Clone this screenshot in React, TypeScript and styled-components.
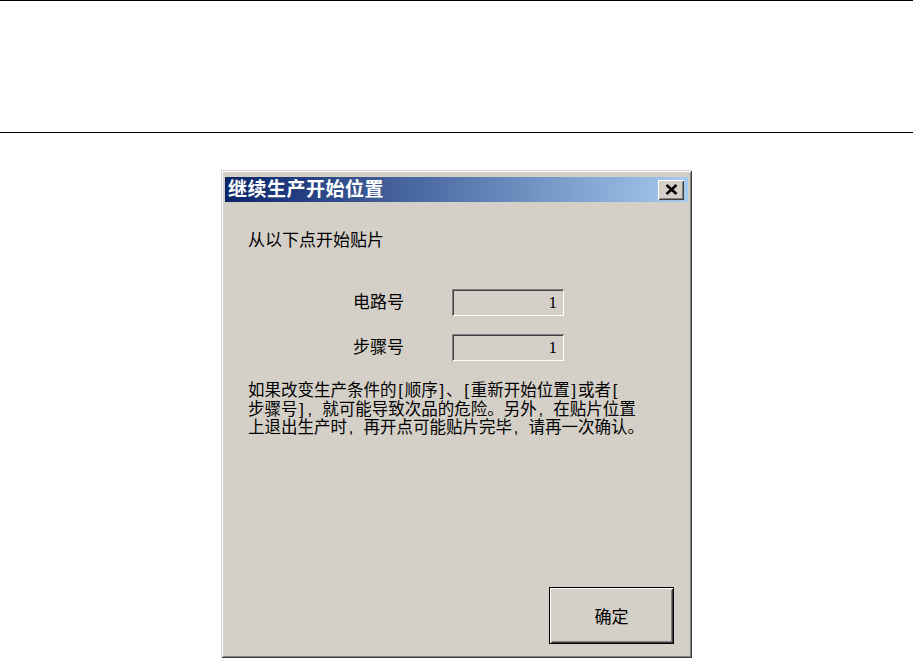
import React from 'react';
import styled, { createGlobalStyle } from 'styled-components';

const GlobalStyle = createGlobalStyle`
  html, body {
    margin: 0;
    padding: 0;
    background: #ffffff;
  }
  body {
    font-family: "Liberation Sans", "Noto Sans CJK SC", sans-serif;
    color: #000000;
  }
`;

const Page = styled.div`
  width: 913px;
  height: 658px;
  overflow: hidden;
  display: flex;
  flex-direction: column;
`;

const Header = styled.div`
  height: 131px;
  border-top: 1px solid #000;
  border-bottom: 1px solid #000;
`;

const Stage = styled.div`
  flex: 1;
  display: flex;
  justify-content: center;
  padding-top: 37px;
`;

const Dialog = styled.div`
  width: 471px;
  box-sizing: border-box;
  display: flex;
  flex-direction: column;
  padding: 7px 4px 4px 4px;
  background: #d4d0c8;
  box-shadow: inset 1px 1px #d4d0c8, inset -1px -1px #404040,
    inset 2px 2px #ffffff, inset -2px -2px #808080;
`;

const TitleBar = styled.div`
  height: 25px;
  display: flex;
  align-items: center;
  justify-content: space-between;
  padding: 0 4px 0 3px;
  background: linear-gradient(to right, #0a246a, #a6caf0);
`;

const Title = styled.span`
  color: #ffffff;
  font-size: 19px;
  font-weight: 700;
  letter-spacing: 0.5px;
  line-height: 25px;
`;

const Bevel = styled.button`
  margin: 0;
  padding: 0;
  border: none;
  background: #d4d0c8;
  box-shadow: inset 1px 1px #ffffff, inset -1px -1px #404040,
    inset 2px 2px #d4d0c8, inset -2px -2px #808080;
  display: flex;
  align-items: center;
  justify-content: center;
  font-family: inherit;
  color: #000;
`;

const CloseButton = styled(Bevel)`
  width: 26px;
  height: 20px;
`;

const Body = styled.div`
  flex: 1;
  display: flex;
  flex-direction: column;
  padding: 29px 14px 10px 23px;
`;

const Intro = styled.div`
  font-size: 17px;
  line-height: 19px;
`;

const FieldList = styled.div`
  display: grid;
  grid-template-columns: 99px 112px;
  row-gap: 18px;
  align-items: center;
  margin-top: 39px;
  padding-left: 105px;
`;

const Label = styled.span`
  font-size: 17px;
  line-height: 27px;
`;

const Field = styled.div`
  height: 27px;
  box-sizing: border-box;
  padding-right: 7px;
  text-align: right;
  font-family: "Liberation Serif", serif;
  font-size: 17px;
  line-height: 27px;
  box-shadow: inset 1px 1px #808080, inset -1px -1px #ffffff,
    inset 2px 2px #404040, inset -2px -2px #d4d0c8;
`;

const Notice = styled.div`
  margin-top: 20px;
  font-size: 16.5px;
  line-height: 18.5px;
`;

const Line = styled.div`
  white-space: nowrap;
`;

const Half = styled.span`
  display: inline-block;
  width: 0.5em;
  text-align: center;
`;

const OkButton = styled(Bevel)`
  margin-top: auto;
  align-self: flex-end;
  width: 125px;
  height: 57px;
  font-size: 17px;
  box-shadow: inset 0 0 0 1px #000, inset 2px 2px #ffffff,
    inset -2px -2px #404040, inset 3px 3px #d4d0c8,
    inset -3px -3px #808080;
`;

// ascii chars take half a cell, like the bitmap font in the original
const mixed = (s: string) =>
  Array.from(s).map((ch, i) =>
    ch.charCodeAt(0) < 128 ? <Half key={i}>{ch}</Half> : ch
  );

const noticeLines = [
  '如果改变生产条件的[顺序]、[重新开始位置]或者[',
  '步骤号], 就可能导致次品的危险。另外, 在贴片位置',
  '上退出生产时, 再开点可能贴片完毕, 请再一次确认。',
];

export default function App() {
  return (
    <Page>
      <GlobalStyle />
      <Header />
      <Stage>
        <Dialog>
          <TitleBar>
            <Title>继续生产开始位置</Title>
            <CloseButton aria-label="close">
              <svg width="13" height="11" viewBox="0 0 13 11">
                <path d="M1.5 1 L11.5 10 M11.5 1 L1.5 10" stroke="#000" strokeWidth="2.6" />
              </svg>
            </CloseButton>
          </TitleBar>
          <Body>
            <Intro>从以下点开始贴片</Intro>
            <FieldList>
              <Label>电路号</Label>
              <Field>1</Field>
              <Label>步骤号</Label>
              <Field>1</Field>
            </FieldList>
            <Notice>
              {noticeLines.map((line) => (
                <Line key={line}>{mixed(line)}</Line>
              ))}
            </Notice>
            <OkButton>确定</OkButton>
          </Body>
        </Dialog>
      </Stage>
    </Page>
  );
}
